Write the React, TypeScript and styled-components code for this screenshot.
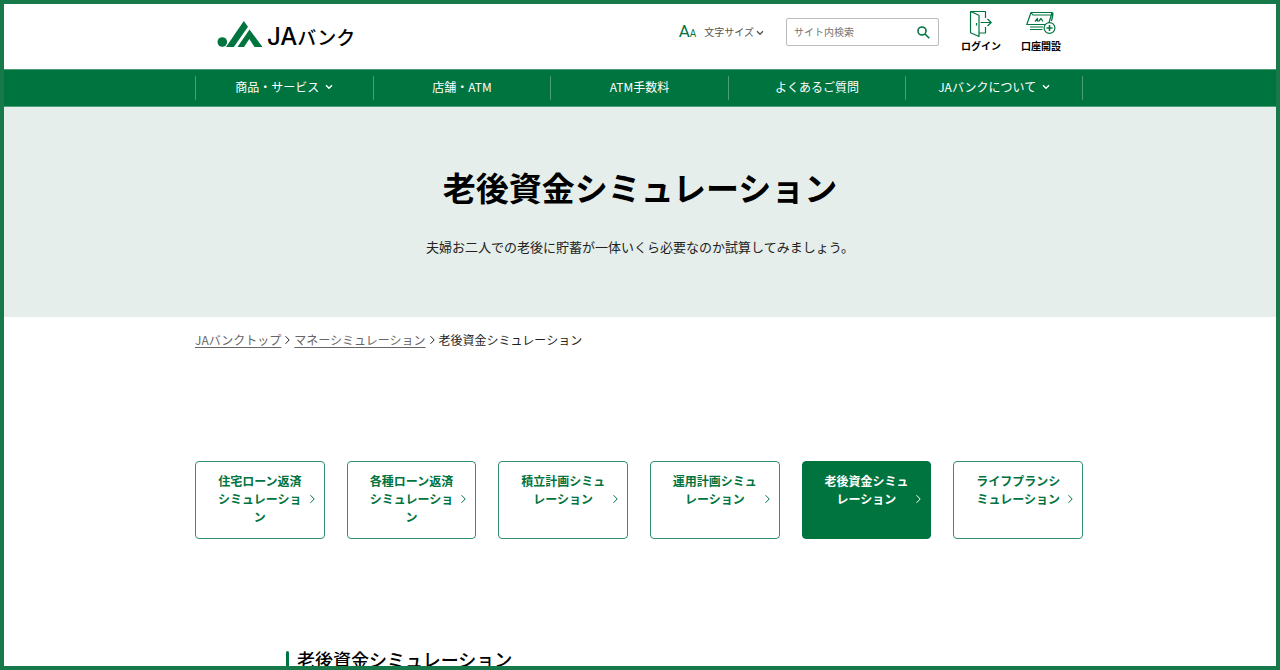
import React from "react";
import styled, { createGlobalStyle, css } from "styled-components";

const green = "#00743f";
const cjk = `"Noto Sans CJK JP", sans-serif`;

const GlobalStyle = createGlobalStyle`
  *, *::before, *::after { box-sizing: border-box; }
  body { margin: 0; background: #fff; color: #000; font-family: ${cjk}; font-size: 12px; line-height: 18px; }
  button, input { font-family: inherit; }
  h1, h2, p, ul, ol { margin: 0; padding: 0; }
  ul, ol { list-style: none; }
  a { color: inherit; text-decoration: none; }
`;

const Frame = styled.div`
  height: 100vh;
  overflow: hidden;
  border: 4px solid #17794a;
`;

const Container = styled.div`
  width: 100%;
  max-width: 890px;
  margin: 0 auto;
  padding-right: 2px;
`;

const HeaderRow = styled(Container)`
  display: flex;
  justify-content: space-between;
  align-items: flex-start;
  padding: 0 24px 0 22px;
  min-height: 65px;
`;

const Logo = styled.a`
  display: flex;
  align-items: center;
  gap: 4px;
  padding-top: 16px;
`;

const LogoText = styled.span`
  display: flex;
  align-items: baseline;
  height: 30px;
  line-height: 34px;
  font-size: 19px;
  font-weight: 500;
`;

const LogoLatin = styled.span`
  font-family: Inter, "Liberation Sans", sans-serif;
  font-size: 24px;
  font-weight: 500;
`;

const Tools = styled.div`
  display: flex;
  align-items: flex-start;
`;

const SizeButton = styled.button`
  display: flex;
  align-items: center;
  margin: 18px 22px 0 0;
  padding: 0;
  border: 0;
  background: none;
  color: #555;
  font-size: 10px;
  line-height: 18px;
  cursor: pointer;
`;

const SizeMark = styled.span`
  margin-right: 8px;
  color: ${green};
  font-family: Roboto, sans-serif;
  font-size: 17px;
  small { font-size: 10px; }
`;

const SizeLabel = styled.span`
  margin-right: 2px;
  padding-bottom: 2px;
`;

const Search = styled.form`
  display: flex;
  width: 153px;
  height: 28px;
  margin: 14px 22px 0 0;
  border: 1px solid #bbb;
  border-radius: 2px;
`;

const SearchInput = styled.input`
  flex: 1;
  min-width: 0;
  padding: 0 0 2px 7px;
  border: 0;
  outline: 0;
  background: none;
  font-size: 10px;
  &::placeholder { color: #757575; opacity: 1; }
`;

const SearchButton = styled.button`
  display: flex;
  align-items: center;
  padding: 0 8px;
  border: 0;
  background: none;
  color: ${green};
  cursor: pointer;
`;

const Shortcut = styled.a`
  display: flex;
  flex-direction: column;
  align-items: center;
  width: 40px;
  padding-top: 6px;
  font-size: 10px;
  line-height: 16px;
  font-weight: 700;
  white-space: nowrap;
  & + & { margin-left: 20px; }
  svg { color: ${green}; }
`;

const Nav = styled.nav`
  background: ${green};
  border-top: 1px solid #4c9d78;
  border-bottom: 1px solid #4c9d78;
  color: #fff;
`;

const NavList = styled.ul`
  display: grid;
  grid-template-columns: repeat(5, 1fr);
  padding: 6px 0;
  li { border-left: 1px solid #4c9d78; }
  li:last-child { border-right: 1px solid #4c9d78; }
`;

const NavLink = styled.a`
  display: flex;
  justify-content: center;
  align-items: center;
  gap: 6px;
  height: 24px;
  padding-bottom: 2px;
`;

const Hero = styled.section`
  padding: 58px 0 60px;
  background: #e5eeea;
  text-align: center;
`;

const HeroTitle = styled.h1`
  font-size: 33px;
  line-height: 44px;
  font-weight: 700;
`;

const HeroText = styled.p`
  margin-top: 28px;
  color: #222;
  font-size: 13px;
  line-height: 20px;
`;

const Crumbs = styled.ol`
  display: flex;
  align-items: center;
  gap: 3px;
  padding-top: 14px;
  color: #222;
  li { display: flex; align-items: center; gap: 3px; }
  a { color: #666; text-decoration: underline; text-underline-offset: 2px; }
`;

const Cards = styled.ul`
  display: grid;
  grid-template-columns: repeat(6, 1fr);
  gap: 22px;
  margin-top: 112px;
  li { display: flex; }
`;

const Card = styled.a<{ $active?: boolean }>`
  position: relative;
  flex: 1;
  padding: 10px 20px 12px;
  border: 1px solid #33906a;
  border-radius: 4px;
  color: ${green};
  font-weight: 700;
  text-align: center;
  ${(p) => p.$active && css`background: ${green}; border-color: ${green}; color: #fff;`}
  svg { position: absolute; right: 8px; top: calc(50% - 6px); }
`;

const Section = styled.section`
  width: 100%;
  max-width: 708px;
  margin: 109px auto 0;
`;

const SectionTitle = styled.h2`
  display: flex;
  align-items: center;
  gap: 8px;
  font-size: 18px;
  line-height: 22px;
  font-weight: 500;
  &::before {
    content: "";
    width: 3px;
    height: 16px;
    border-radius: 2px;
    background: ${green};
  }
`;

const Stroke = ({ w, h, d, sw = 1 }: { w: number; h: number; d: string; sw?: number }) => (
  <svg width={w} height={h} viewBox={`0 0 ${w} ${h}`} fill="none" stroke="currentColor" strokeWidth={sw} aria-hidden="true">
    <path d={d} />
  </svg>
);

const Down = () => <Stroke w={8} h={6} d="M1 1.2 4 4.2 7 1.2" sw={1.4} />;
const Right = () => <Stroke w={7} h={10} d="M1.5 1.2 5.2 5 1.5 8.8" sw={1} />;

const LogoMark = () => (
  <svg width="46" height="28" viewBox="0 0 46 28" fill={green} aria-hidden="true">
    <circle cx="5.3" cy="21" r="4.8" />
    <path d="M9 26 26.8 0 31 5.8 16.8 26Z" />
    <path d="M20.5 26 32.5 8.5 45.5 26H37.5L32.3 18 27 26Z" />
  </svg>
);

const LoginIcon = () => (
  <svg width="24" height="28" viewBox="0 0 24 28" fill="none" stroke="currentColor" strokeWidth="1.2" aria-hidden="true">
    <path d="M1.5 1.5 10 5.2V26.5L1.5 22.8Z M1.5 1.5H16.5V8 M16.5 17V23H10 M11.5 12.5H22 M18.5 9 22.2 12.5 18.5 16 M7.5 13V15.5" strokeLinejoin="round" />
  </svg>
);

const AccountIcon = () => (
  <svg width="32" height="28" viewBox="0 0 32 28" fill="none" stroke="currentColor" strokeWidth="1.2" strokeLinejoin="round" aria-hidden="true">
    <path d="M6 2.5H27L23.5 14.5H1.8Z M6 2.5 8 5H27.8V2.5 M27.8 5 26.5 11 M5 17H18 M5 19.5H17.5" />
    <path d="M10 11.5 12.5 8.5V11.5 M13.5 11.5 16 8.5 18 11.5" />
    <circle cx="24.5" cy="18" r="5.4" fill="#fff" />
    <path d="M24.5 15V21 M21.5 18H27.5" strokeWidth="1.5" />
  </svg>
);

const navItems = [
  { label: "商品・サービス", menu: true },
  { label: "店舗・ATM" },
  { label: "ATM手数料" },
  { label: "よくあるご質問" },
  { label: "JAバンクについて", menu: true },
];

const simulations = [
  "住宅ローン返済シミュレーション",
  "各種ローン返済シミュレーション",
  "積立計画シミュレーション",
  "運用計画シミュレーション",
  "老後資金シミュレーション",
  "ライフプランシミュレーション",
];

const current = "老後資金シミュレーション";

export default function App() {
  return (
    <Frame lang="ja">
      <GlobalStyle />
      <header>
        <HeaderRow>
          <Logo href="#">
            <LogoMark />
            <LogoText><LogoLatin>JA</LogoLatin>バンク</LogoText>
          </Logo>
          <Tools>
            <SizeButton type="button">
              <SizeMark aria-hidden="true">A<small>A</small></SizeMark>
              <SizeLabel>文字サイズ</SizeLabel>
              <Down />
            </SizeButton>
            <Search role="search">
              <SearchInput type="text" placeholder="サイト内検索" aria-label="サイト内検索" />
              <SearchButton type="button" aria-label="検索">
                <Stroke w={13} h={13} d="M9 5A4 4 0 1 1 1 5A4 4 0 1 1 9 5Z M8 8 12.3 12.2" sw={1.6} />
              </SearchButton>
            </Search>
            <Shortcut href="#"><LoginIcon />ログイン</Shortcut>
            <Shortcut href="#"><AccountIcon />口座開設</Shortcut>
          </Tools>
        </HeaderRow>
        <Nav>
          <Container>
            <NavList>
              {navItems.map((item) => (
                <li key={item.label}>
                  <NavLink href="#">{item.label}{item.menu && <Down />}</NavLink>
                </li>
              ))}
            </NavList>
          </Container>
        </Nav>
      </header>
      <main>
        <Hero>
          <HeroTitle>{current}</HeroTitle>
          <HeroText>夫婦お二人での老後に貯蓄が一体いくら必要なのか試算してみましょう。</HeroText>
        </Hero>
        <Container>
          <Crumbs>
            <li><a href="#">JAバンクトップ</a><Right /></li>
            <li><a href="#">マネーシミュレーション</a><Right /></li>
            <li aria-current="page">{current}</li>
          </Crumbs>
          <Cards>
            {simulations.map((name) => (
              <li key={name}>
                <Card href="#" $active={name === current}>{name}<Right /></Card>
              </li>
            ))}
          </Cards>
        </Container>
        <Section>
          <SectionTitle>{current}</SectionTitle>
        </Section>
      </main>
    </Frame>
  );
}
